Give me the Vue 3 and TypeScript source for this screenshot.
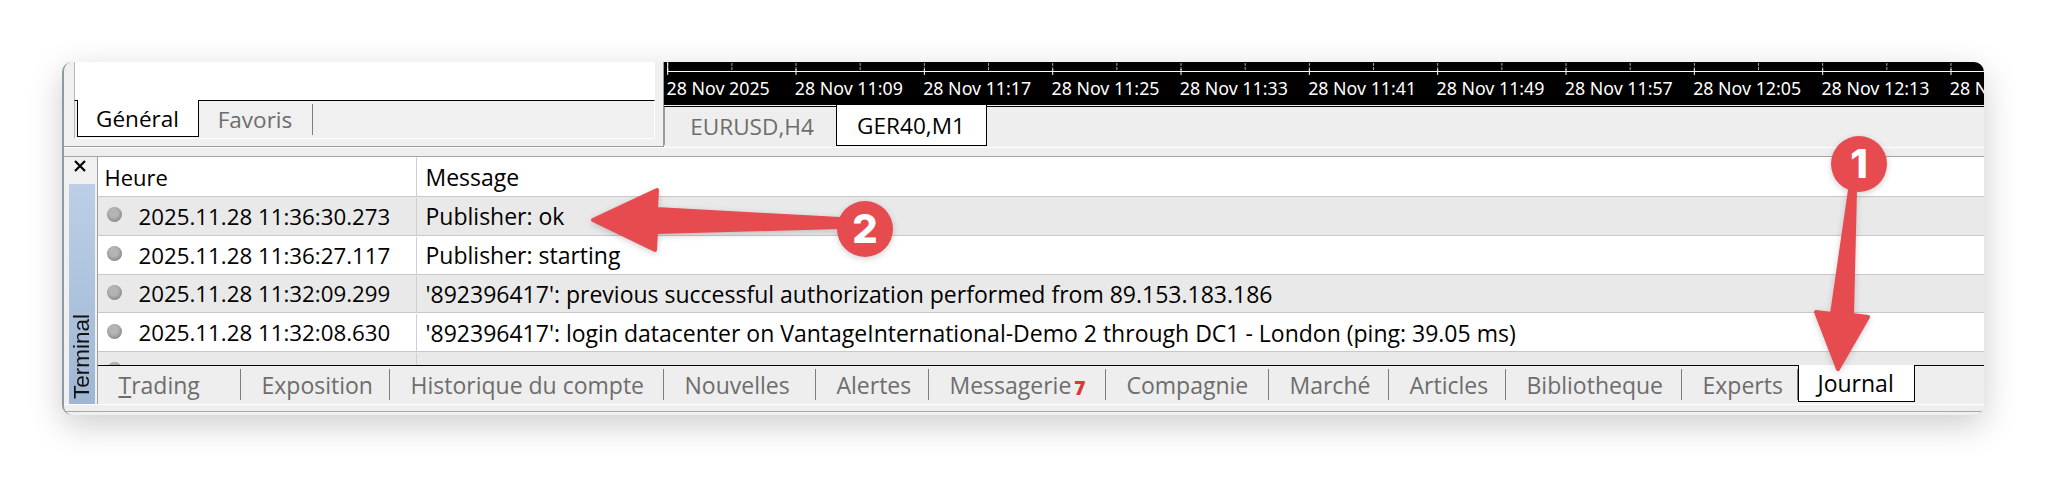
<script setup lang="ts">
const majorStep = 128.33
const majors = Array.from({ length: 11 }, (_, i) => 3.7 + i * majorStep)
const minors = Array.from({ length: 21 }, (_, i) => 3.7 + (i * majorStep) / 2)
const axisLabels = ['28 Nov 2025', '28 Nov 11:09', '28 Nov 11:17', '28 Nov 11:25', '28 Nov 11:33', '28 Nov 11:41', '28 Nov 11:49', '28 Nov 11:57', '28 Nov 12:05', '28 Nov 12:13', '28 N']
const rows = [
  { time: '2025.11.28 11:36:30.273', msg: 'Publisher: ok' },
  { time: '2025.11.28 11:36:27.117', msg: 'Publisher: starting' },
  { time: '2025.11.28 11:32:09.299', msg: "'892396417': previous successful authorization performed from 89.153.183.186" },
  { time: '2025.11.28 11:32:08.630', msg: "'892396417': login datacenter on VantageInternational-Demo 2 through DC1 - London (ping: 39.05 ms)" },
  { time: '', msg: '' },
]
const tabs = [
  { label: 'Trading', w: 143 },
  { label: 'Exposition', w: 149 },
  { label: 'Historique du compte', w: 274 },
  { label: 'Nouvelles', w: 152 },
  { label: 'Alertes', w: 113 },
  { label: 'Messagerie', w: 177, badge: '7' },
  { label: 'Compagnie', w: 163 },
  { label: 'Marché', w: 120 },
  { label: 'Articles', w: 117 },
  { label: 'Bibliotheque', w: 176 },
  { label: 'Experts', w: 116 },
  { label: 'Journal', w: 117, active: true },
]
</script>

<template>
  <div class="page">
    <div class="window">
      <div class="top">
        <div class="nav">
          <div class="nav-white"></div>
          <div class="nav-tabs">
            <div class="tab-on general">Général</div>
            <div class="tab-off favoris">Favoris</div>
          </div>
        </div>
        <div class="chart-side">
          <div class="chart">
            <svg class="ruler" width="1320" height="14" viewBox="0 0 1320 14">
              <line v-for="m in minors" :key="m" :x1="m" :x2="m" y1="1" y2="8" stroke="#a0a0a0" stroke-dasharray="3 1" />
              <line x1="4" x2="1320" y1="9.5" y2="9.5" stroke="#fff" />
              <line x1="3.7" x2="3.7" y1="0" y2="10" stroke="#fff" />
              <line v-for="m in majors" :key="'M' + m" :x1="m" :x2="m" y1="7" y2="13" stroke="#fff" />
            </svg>
            <div class="axis">
              <span v-for="l in axisLabels" :key="l" class="axis-label">{{ l }}</span>
            </div>
          </div>
          <div class="chart-tabs">
            <div class="tab-off eur">EURUSD,H4</div>
            <div class="tab-on ger">GER40,M1</div>
          </div>
        </div>
      </div>
      <div class="splitter"></div>
      <div class="terminal">
        <div class="rail">
          <div class="close">
            <svg width="12" height="12" viewBox="0 0 12 12">
              <path d="M1 1 L11 11 M11 1 L1 11" stroke="#000" stroke-width="2.2" fill="none" />
            </svg>
          </div>
          <div class="rail-bar"><span class="rail-text">Terminal</span></div>
        </div>
        <div class="main">
          <div class="table">
            <div class="row head">
              <div class="c1 head-c1">Heure</div>
              <div class="c2">Message</div>
            </div>
            <div v-for="(r, i) in rows" :key="i" class="row" :class="{ odd: i % 2 === 0 }">
              <div class="c1 time"><span class="dot"></span><span>{{ r.time }}</span></div>
              <div class="c2">{{ r.msg }}</div>
            </div>
          </div>
          <div class="bottom-tabs">
            <div
              v-for="t in tabs"
              :key="t.label"
              class="btab"
              :class="{ journal: t.active }"
              :style="{ width: t.w + 'px' }"
            >
              <span><template v-if="t.label === 'Trading'"><u>T</u>rading</template><template v-else>{{ t.label }}</template></span>
              <span v-if="t.badge" class="badge">{{ t.badge }}</span>
            </div>
          </div>
        </div>
      </div>
      <div class="foot"></div>
    </div>
    <svg class="marks" width="2046" height="478" viewBox="0 0 2046 478">
      <g fill="#e64b50" stroke="#e64b50" stroke-linejoin="round" class="mark">
        <path stroke-width="4" d="M1850 190 L1855 190 L1852 315 L1868 317 L1838 369 L1816 312 L1832 314 Z" />
        <circle cx="1859" cy="164" r="28" stroke="none" />
        <path stroke-width="4" d="M593 220 L657 190 L656 209 L840 219 L840 227 L656 232 L655 250 Z" />
        <circle cx="865" cy="229" r="28" stroke="none" />
      </g>
      <text x="1859" y="178" class="num">1</text>
      <text x="865" y="243" class="num">2</text>
    </svg>
  </div>
</template>

<style>
html, body { margin: 0; background: #fff; }
</style>

<style scoped>
.page {
  position: relative;
  width: 2046px;
  height: 478px;
  overflow: hidden;
  padding: 62px 0 0 62px;
  box-sizing: border-box;
  font-family: "Open Sans", "Noto Sans", sans-serif;
  font-size: 23px;
  color: #000;
}
.window {
  width: 1922px;
  height: 353px;
  box-sizing: border-box;
  display: flex;
  flex-direction: column;
  background: #f0f0f0;
  border-left: 2.5px solid #8d99a4;
  border-radius: 10px;
  overflow: hidden;
  box-shadow: 0 10px 34px rgba(0, 0, 0, 0.2);
}
.top { display: flex; height: 85px; }
.nav {
  width: 599.5px;
  box-sizing: border-box;
  padding: 0 8px 0 9.5px;
  display: flex;
  flex-direction: column;
  border-right: 1px solid #9a9a9a;
  border-bottom: 1px solid #9a9a9a;
  background: #f0f0f0;
}
.nav-white { height: 38px; background: #fff; flex: none; border-left: 1px solid #b8b8b8; }
.nav-tabs {
  flex: none;
  height: 39px;
  display: flex;
  align-items: flex-start;
  border-top: 1px solid #000;
  border-bottom: 1px solid #fff;
  border-left: 1px solid #b8b8b8;
  border-right: 1px solid #fff;
  box-sizing: border-box;
}
.tab-on {
  background: #fff;
  border: 1px solid #000;
  border-top: none;
  border-bottom-width: 1.5px;
  box-sizing: border-box;
  display: flex;
  align-items: center;
  justify-content: center;
  color: #000;
}
.tab-off { color: #6d6d6d; display: flex; align-items: center; justify-content: center; box-sizing: border-box; }
.general { width: 122px; height: 37px; margin: -1px 0 0 2px; font-size: 22.5px; }
.favoris { width: 114px; height: 31px; margin-top: 3px; border-right: 1px solid #7e7e7e; font-size: 22.5px; }
.chart-side { flex: 1; display: flex; flex-direction: column; min-width: 0; }
.chart { height: 43px; background: #000; position: relative; overflow: hidden; flex: none; }
.ruler { display: block; }
.axis { display: flex; padding-left: 3px; white-space: nowrap; height: 24px; align-items: center; overflow: hidden; }
.axis-label {
  flex: none;
  width: 128.33px;
  color: #fff;
  font-family: "Noto Sans", sans-serif;
  font-size: 17.8px;
}
.chart-tabs {
  margin-top: 1px;
  height: 41px;
  flex: none;
  border-top: 1.5px solid #000;
  box-sizing: border-box;
  display: flex;
  align-items: flex-start;
  background: #eeeeee;
}
.eur { width: 172px; height: 38px; font-size: 22.6px; border-left: 1px solid #9a9a9a; padding-left: 4px; }
.ger { width: 151px; height: 41px; margin-top: -2.5px; padding-top: 2px; font-size: 22.6px; }
.splitter {
  height: 10px;
  flex: none;
  box-sizing: border-box;
  border-top: 1px solid #fff;
  border-bottom: 1.5px solid #a5a5a5;
  background: #eeeeee;
}
.terminal { flex: none; height: 247px; display: flex; }
.rail { width: 32.5px; flex: none; display: flex; flex-direction: column; }
.close {
  height: 27px;
  flex: none;
  padding: 3px 0 0 10px;
  box-sizing: border-box;
}
.close svg { display: block; }
.rail-bar {
  margin-left: 4.5px;
  width: 26px;
  height: 221px;
  flex: none;
  background: linear-gradient(#bccfe6, #9fb6d3);
  display: flex;
  align-items: flex-end;
  justify-content: center;
}
.rail-text {
  writing-mode: vertical-rl;
  transform: rotate(180deg);
  font-family: "Liberation Sans", sans-serif;
  font-size: 22.5px;
  color: #111;
  line-height: 26px;
  padding-top: 6px;
}
.main { flex: 1; min-width: 0; display: flex; flex-direction: column; border-left: 1px solid #a0a0a0; }
.table {
  height: 208px;
  flex: none;
  overflow: hidden;
  background: #fff;
  box-sizing: border-box;
}
.row {
  height: 38.75px;
  display: flex;
  box-sizing: border-box;
  border-bottom: 1.5px solid #c8c8c8;
  background: #fff;
  white-space: nowrap;
  padding-top: 1px;
}
.row.odd { background: #e9e9e9; }
.row.head { height: 40px; padding-top: 0; }
.row > div { margin-top: 0; }
.c1 {
  width: 319px;
  flex: none;
  box-sizing: border-box;
  border-right: 1px solid #d0d0d0;
  display: flex;
  align-items: center;
  padding-left: 9px;
}
.time { font-size: 22.3px; }
.head-c1 { padding: 1px 0 0 7px; font-size: 22px; }
.c2 {
  flex: 1;
  display: flex;
  align-items: center;
  padding-left: 9px;
}
.head .c2 { padding-top: 1px; }
.dot {
  width: 15px;
  height: 15px;
  border-radius: 50%;
  flex: none;
  margin-right: 17px;
  margin-top: -3px;
  background: radial-gradient(circle at 45% 40%, #b4b4b4 0 35%, #8c8c8c 72%, #c8c8c8 100%);
}
.bottom-tabs {
  height: 39px;
  flex: none;
  display: flex;
  align-items: flex-start;
  border-top: 1.5px solid #000;
  box-sizing: border-box;
  background: #eeeeee;
}
.btab {
  flex: none;
  height: 31px;
  margin-top: 3px;
  padding-left: 21px;
  box-sizing: border-box;
  display: flex;
  align-items: center;
  border-right: 1px solid #7e7e7e;
  color: #6d6d6d;
}
.btab.journal {
  height: 37.5px;
  margin-top: -1.5px;
  padding-left: 19px;
  color: #000;
  background: #fff;
  border: 1px solid #000;
  border-top: none;
  border-bottom-width: 1.5px;
}
.badge {
  color: #d83a3a;
  font-weight: 800;
  font-size: 19px;
  margin-left: 3px;
  margin-top: 6px;
}
.foot {
  flex: none;
  height: 8px;
  margin-bottom: 3px;
  box-sizing: border-box;
  background: #eeeeee;
  border-top: 1.5px solid #fff;
  border-bottom: 1.5px solid #a8a8a8;
}
.marks { position: absolute; left: 0; top: 0; }
.mark { filter: drop-shadow(0 2px 3px rgba(0, 0, 0, 0.18)); }
.num {
  fill: #fff;
  font-family: "Inter", "Open Sans", sans-serif;
  font-weight: 800;
  font-size: 40px;
  text-anchor: middle;
}
</style>
